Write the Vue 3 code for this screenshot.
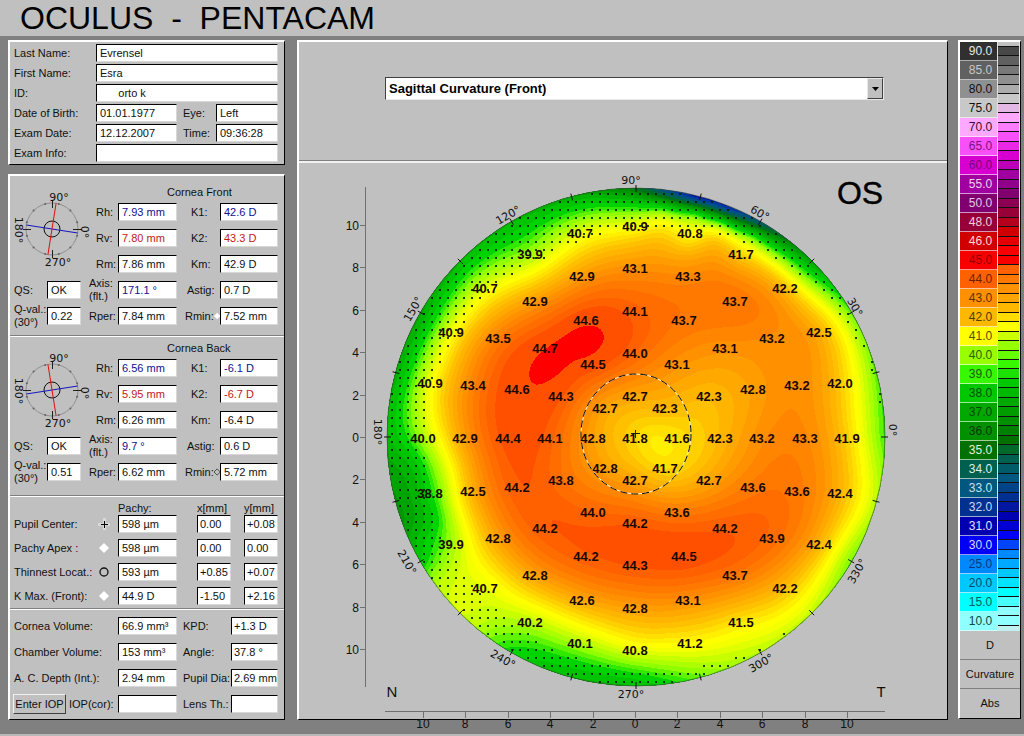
<script setup>
import { reactive, ref } from 'vue'

const title = 'OCULUS\u00a0 -\u00a0 PENTACAM'

const patient = reactive({
  last: 'Evrensel', first: 'Esra', id: '      orto k', birth: '01.01.1977',
  eye: 'Left', date: '12.12.2007', time: '09:36:28', info: ''
})

const corneas = reactive([
  {
    key: 'front', title: 'Cornea Front', axisAngle: 171, marker: 'solid',
    qs: 'OK', q: '0.22',
    rows: [
      { l: 'Rh:', v: '7.93 mm', l2: 'K1:', v2: '42.6 D', tone: 'blue' },
      { l: 'Rv:', v: '7.80 mm', l2: 'K2:', v2: '43.3 D', tone: 'red' },
      { l: 'Rm:', v: '7.86 mm', l2: 'Km:', v2: '42.9 D', tone: '' }
    ],
    axis: '171.1 °', astig: '0.7 D', rper: '7.84 mm', rmin: '7.52 mm'
  },
  {
    key: 'back', title: 'Cornea Back', axisAngle: 9, marker: 'open',
    qs: 'OK', q: '0.51',
    rows: [
      { l: 'Rh:', v: '6.56 mm', l2: 'K1:', v2: '-6.1 D', tone: 'blue' },
      { l: 'Rv:', v: '5.95 mm', l2: 'K2:', v2: '-6.7 D', tone: 'red' },
      { l: 'Rm:', v: '6.26 mm', l2: 'Km:', v2: '-6.4 D', tone: '' }
    ],
    axis: '9.7 °', astig: '0.6 D', rper: '6.62 mm', rmin: '5.72 mm'
  }
])

const pachy = reactive([
  { label: 'Pupil Center:', icon: 'plus', v: '598 µm', x: '0.00', y: '+0.08' },
  { label: 'Pachy Apex :', icon: 'diamond', v: '598 µm', x: '0.00', y: '0.00' },
  { label: 'Thinnest Locat.:', icon: 'ring', v: '593 µm', x: '+0.85', y: '+0.07' },
  { label: 'K Max. (Front):', icon: 'diamond', v: '44.9 D', x: '-1.50', y: '+2.16' }
])

const volumes = reactive([
  { l: 'Cornea Volume:', v: '66.9 mm³', l2: 'KPD:', v2: '+1.3 D' },
  { l: 'Chamber Volume:', v: '153 mm³', l2: 'Angle:', v2: '37.8 °' },
  { l: 'A. C. Depth (Int.):', v: '2.94 mm', l2: 'Pupil Dia:', v2: '2.69 mm' },
  { l: 'IOP(cor):', v: '', l2: 'Lens Th.:', v2: '', button: true }
])

const mapType = ref('Sagittal Curvature (Front)')

/* colour scale */
const swatches = [
  ['90.0', '#303030', '#e8e8e8'], ['85.0', '#606060', '#c8c8c8'], ['80.0', '#909090', '#101010'],
  ['75.0', '#c8c8c8', '#101010'], ['70.0', '#ffa8ff', '#301030'], ['65.0', '#f850f8', '#801080'],
  ['60.0', '#d800d0', '#780078'], ['55.0', '#a000a0', '#f0d0f0'], ['50.0', '#800070', '#e8c8e8'],
  ['48.0', '#980038', '#f0d0d8'], ['46.0', '#d00000', '#ffd8d0'], ['45.0', '#f80000', '#900000'],
  ['44.0', '#ff6000', '#702000'], ['43.0', '#ff9000', '#603000'], ['42.0', '#ffb800', '#504000'],
  ['41.0', '#ffff00', '#505000'], ['40.0', '#98ff00', '#306000'], ['39.0', '#38f800', '#106000'],
  ['38.0', '#00c800', '#005000'], ['37.0', '#00a800', '#004800'], ['36.0', '#009000', '#003800'],
  ['35.0', '#007000', '#e0f0e0'], ['34.0', '#006050', '#d8f0e8'], ['33.0', '#005880', '#c8e0f0'],
  ['32.0', '#003090', '#d0d8f8'], ['31.0', '#0000b0', '#e0e0ff'], ['30.0', '#0000f8', '#d8d8ff'],
  ['25.0', '#0088ff', '#003880'], ['20.0', '#00c8ff', '#004870'], ['15.0', '#00ffff', '#006060'],
  ['10.0', '#90ffff', '#104848']
].map(([value, color, ink]) => ({ value, color, ink }))

function mix(a, b) {
  const h = (s, i) => parseInt(s.slice(i, i + 2), 16)
  return `rgb(${[1, 3, 5].map(i => Math.round((h(a, i) + h(b, i)) / 2)).join(',')})`
}
const strip = Array.from({ length: 61 }, (_, k) => {
  const i = Math.floor((k + 1) / 2)
  if (k % 2 || i === 11) return swatches[i].color
  return mix(swatches[i].color, swatches[Math.min(i + 1, 30)].color)
})

/* measured points: x, y, dioptres */
const points = [
  [580, 233, '40.7'], [635, 226, '40.9'], [690, 233, '40.8'], [530, 254, '39.9'], [741, 254, '41.7'],
  [582, 276, '42.9'], [635, 268, '43.1'], [688, 276, '43.3'], [485, 288, '40.7'], [785, 288, '42.2'],
  [535, 301, '42.9'], [735, 301, '43.7'], [586, 320, '44.6'], [635, 311, '44.1'], [684, 320, '43.7'],
  [451, 332, '40.9'], [498, 338, '43.5'], [545, 348, '44.7'], [772, 338, '43.2'], [819, 332, '42.5'],
  [725, 348, '43.1'], [593, 364, '44.5'], [635, 353, '44.0'], [677, 364, '43.1'],
  [430, 383, '40.9'], [473, 385, '43.4'], [517, 389, '44.6'], [561, 396, '44.3'], [635, 396, '42.7'],
  [605, 408, '42.7'], [665, 408, '42.3'], [709, 396, '42.3'], [753, 389, '42.8'], [797, 385, '43.2'], [840, 383, '42.0'],
  [423, 438, '40.0'], [465, 438, '42.9'], [508, 438, '44.4'], [550, 438, '44.1'], [593, 438, '42.8'],
  [635, 438, '41.8'], [677, 438, '41.6'], [720, 438, '42.3'], [762, 438, '43.2'], [805, 438, '43.3'], [847, 438, '41.9'],
  [605, 468, '42.8'], [665, 468, '41.7'], [561, 480, '43.8'], [635, 480, '42.7'], [709, 480, '42.7'],
  [430, 493, '38.8'], [473, 491, '42.5'], [517, 487, '44.2'], [753, 487, '43.6'], [797, 491, '43.6'], [840, 493, '42.4'],
  [593, 512, '44.0'], [635, 523, '44.2'], [677, 512, '43.6'], [545, 528, '44.2'], [725, 528, '44.2'],
  [498, 538, '42.8'], [772, 538, '43.9'], [451, 544, '39.9'], [819, 544, '42.4'],
  [586, 556, '44.2'], [635, 565, '44.3'], [684, 556, '44.5'], [535, 575, '42.8'], [735, 575, '43.7'],
  [485, 588, '40.7'], [785, 588, '42.2'], [582, 600, '42.6'], [635, 608, '42.8'], [688, 600, '43.1'],
  [530, 622, '40.2'], [741, 622, '41.5'], [580, 643, '40.1'], [635, 650, '40.8'], [690, 643, '41.2']
]

/* rim estimate: angle, dioptres */
const rim = [
  [0, 39.2], [15, 39.4], [30, 39.4], [40, 38], [50, 36.4], [60, 33.6], [68, 31.4], [76, 31], [83, 33], [90, 35.6],
  [100, 37.2], [110, 37.7], [120, 37.9], [135, 37.9], [150, 37.3], [165, 37.6], [180, 37.9], [190, 37.2], [200, 36.9],
  [208, 38], [216, 40.1], [228, 40.4], [238, 39], [248, 38.2], [260, 37.9], [270, 38], [280, 39], [290, 39.8], [300, 40.2],
  [315, 40.3], [330, 39.5], [345, 40.2]
]
const CX = 636
const CY = 437
const R = 249
const rad = a => (a * Math.PI) / 180

const samples = points.map(([x, y, v]) => [x, y, Number(v)])
rim.forEach(([a, v]) => samples.push([CX + R * Math.cos(rad(a)), CY - R * Math.sin(rad(a)), v]))
samples.push(
  [536, 371, 44.82], [552, 360, 45], [568, 349, 45.1], [582, 340, 45], [594, 332, 44.85], [560, 335, 44.6], [575, 364, 44.6],
  [432, 518, 38.4], [408, 470, 37.7], [414, 520, 37.5], [420, 545, 38.4], [455, 470, 41.4], [456, 505, 40.9],
  [665, 208, 39], [695, 212, 38.8], [722, 221, 38.8], [752, 236, 39.3], [780, 254, 39.3], [805, 276, 39.6],
  [650, 436, 41.5]
)

/* thin plate spline through the samples */
function makeField(pts) {
  const n = pts.length
  const p = pts.map(([x, y, v]) => [(x - CX) / 100, (y - CY) / 100, v])
  const phi = d => (d > 0 ? d * Math.log(d) : 0)
  const size = n + 3
  const m = []
  for (let i = 0; i < size; i++) m.push(new Array(size + 1).fill(0))
  for (let i = 0; i < n; i++) {
    for (let j = 0; j < n; j++) m[i][j] = phi((p[i][0] - p[j][0]) ** 2 + (p[i][1] - p[j][1]) ** 2)
    m[i][i] += 0.015
    const t = [1, p[i][0], p[i][1]]
    t.forEach((c, k) => { m[i][n + k] = c; m[n + k][i] = c })
    m[i][size] = p[i][2]
  }
  for (let c = 0; c < size; c++) {
    let best = c
    for (let r = c + 1; r < size; r++) if (Math.abs(m[r][c]) > Math.abs(m[best][c])) best = r
    ;[m[c], m[best]] = [m[best], m[c]]
    for (let r = c + 1; r < size; r++) {
      const f = m[r][c] / m[c][c]
      if (f) for (let k = c; k <= size; k++) m[r][k] -= f * m[c][k]
    }
  }
  const w = new Array(size).fill(0)
  for (let r = size - 1; r >= 0; r--) {
    let s = m[r][size]
    for (let k = r + 1; k < size; k++) s -= m[r][k] * w[k]
    w[r] = s / m[r][r]
  }
  return (x, y) => {
    const u = (x - CX) / 100
    const v = (y - CY) / 100
    let s = w[n] + w[n + 1] * u + w[n + 2] * v
    for (let i = 0; i < n; i++) s += w[i] * phi((u - p[i][0]) ** 2 + (v - p[i][1]) ** 2)
    return s
  }
}

const levels = [
  [32, '#0038a0'], [33, '#005088'], [34, '#006058'], [35, '#007020'], [36, '#008800'], [36.5, '#009800'],
  [37, '#00a400'], [37.5, '#00b400'], [38, '#00c400'], [38.5, '#00d400'], [39, '#30e800'], [39.3, '#60f400'],
  [39.6, '#90ff00'], [39.9, '#acff00'], [40.2, '#c8ff00'], [40.5, '#e0ff00'], [40.75, '#f4ff00'], [41, '#ffff00'],
  [41.25, '#fff000'], [41.5, '#ffe000'], [41.75, '#ffd000'], [42, '#ffc000'], [42.25, '#ffb400'], [42.5, '#ffa800'],
  [42.75, '#ff9c00'], [43, '#ff9000'], [43.25, '#ff8400'], [43.5, '#ff7800'], [43.75, '#ff6c00'], [44, '#ff6000'],
  [44.25, '#ff5000'], [44.75, '#ff0000']
]

function buildBands() {
  const field = makeField(samples)
  const step = 4
  const n = 126
  const x0 = CX - (n * step) / 2
  const y0 = CY - (n * step) / 2
  const g = []
  for (let j = 0; j <= n; j++) {
    const row = []
    for (let i = 0; i <= n; i++) row.push(field(x0 + i * step, y0 + j * step))
    g.push(row)
  }
  return levels.map(([level, color]) => {
    let d = ''
    for (let j = 0; j < n; j++) {
      let run = -1
      for (let i = 0; i <= n; i++) {
        const c = i < n ? [g[j][i], g[j][i + 1], g[j + 1][i + 1], g[j + 1][i]] : [-1, -1, -1, -1]
        const full = c.every(v => v >= level)
        const x = x0 + i * step
        const y = y0 + j * step
        if (full) { if (run < 0) run = x; continue }
        if (run >= 0) { d += `M${run} ${y}H${x}v${step}H${run}z`; run = -1 }
        if (!c.some(v => v >= level)) continue
        const q = [[x, y], [x + step, y], [x + step, y + step], [x, y + step]]
        const out = []
        for (let k = 0; k < 4; k++) {
          const e = (k + 1) % 4
          if (c[k] >= level) out.push(q[k].join(' '))
          if (c[k] >= level !== c[e] >= level) {
            const t = (level - c[k]) / (c[e] - c[k])
            out.push(`${(q[k][0] + t * (q[e][0] - q[k][0])).toFixed(1)} ${(q[k][1] + t * (q[e][1] - q[k][1])).toFixed(1)}`)
          }
        }
        d += `M${out.join('L')}z`
      }
    }
    return { color, d }
  })
}
const bands = buildBands()

/* extrapolated area, one entry per 8 px row: last dot on the left, first dot on the right */
const dotRows = [
  [194, 900, 0], [202, 900, 0], [210, 900, 0], [218, 900, 0], [226, 900, 0], [234, 600, 720], [242, 576, 744],
  [250, 552, 768], [258, 544, 776], [266, 520, 792], [274, 512, 800], [282, 496, 816], [290, 488, 824],
  [298, 480, 832], [306, 472, 840], [314, 464, 840], [322, 464, 848], [330, 456, 856], [338, 448, 856],
  [346, 448, 864], [354, 440, 870], [362, 440, 870], [370, 432, 870], [378, 432, 900], [386, 424, 876],
  [394, 424, 876], [402, 424, 876], [410, 424, 900], [418, 424, 900], [426, 424, 900], [434, 408, 900],
  [442, 408, 900], [450, 416, 900], [458, 424, 900], [466, 424, 900], [474, 424, 900], [482, 424, 900],
  [490, 424, 900], [498, 424, 900], [506, 424, 900], [514, 432, 900], [522, 432, 900], [530, 432, 900],
  [538, 440, 900], [546, 432, 900], [554, 448, 900], [562, 456, 900], [570, 456, 900], [578, 464, 900],
  [586, 472, 900], [594, 480, 900], [602, 480, 900], [610, 496, 900], [618, 504, 900], [626, 512, 900],
  [634, 528, 784], [642, 536, 776], [650, 552, 760], [658, 576, 736], [666, 608, 704], [674, 900, 0], [682, 900, 0]
]
const dots = dotRows.map(([y, left, right]) => {
  let d = ''
  for (let x = 384; x <= 888; x += 8) {
    if ((x <= left || x >= right) && Math.hypot(x - CX, y - CY) < R - 1) d += `M${x - 1} ${y - 1}h2v2h-2z`
  }
  return d
}).join('')

const rimTicks = Array.from({ length: 24 }, (_, i) => {
  const a = rad(i * 15)
  const at = r => [CX + r * Math.cos(a), CY - r * Math.sin(a)]
  const [x1, y1] = at(R - 4)
  const [x2, y2] = at(R + 3)
  return { x1, y1, x2, y2 }
})
const rimLabels = [
  ['90°', 631, 180, 0], ['60°', 760, 213, 30], ['30°', 855, 307, 60], ['0°', 893, 430, 90], ['330°', 857, 571, -60],
  ['300°', 761, 663, -30], ['270°', 631, 694, 0], ['240°', 503, 659, 30], ['210°', 407, 562, 60],
  ['180°', 378, 432, 90], ['150°', 413, 309, -60], ['120°', 508, 215, -30]
]
const axisSteps = [-10, -8, -6, -4, -2, 0, 2, 4, 6, 8, 10].map(v => ({
  label: Math.abs(v), x: Math.round(635 + v * 21.2), y: Math.round(437 + v * 21.2)
}))
const dialTicks = Array.from({ length: 12 }, (_, i) => ({
  x: 38 + 26 * Math.cos(rad(i * 30 + 15)), y: 53 + 26 * Math.sin(rad(i * 30 + 15))
}))
</script>

<template>
  <div class="app">
    <header class="titlebar"><h1>{{ title }}</h1></header>
    <main class="workspace">
      <div class="side">
        <form class="panel patient">
          <label for="last">Last Name:</label><input id="last" v-model="patient.last" class="field wide">
          <label for="first">First Name:</label><input id="first" v-model="patient.first" class="field wide">
          <label for="pid">ID:</label><input id="pid" v-model="patient.id" class="field wide">
          <label for="birth">Date of Birth:</label><input id="birth" v-model="patient.birth" class="field">
          <label for="eye" class="second">Eye:</label><input id="eye" v-model="patient.eye" class="field">
          <label for="date">Exam Date:</label><input id="date" v-model="patient.date" class="field">
          <label for="time" class="second">Time:</label><input id="time" v-model="patient.time" class="field">
          <label for="info">Exam Info:</label><input id="info" v-model="patient.info" class="field wide">
        </form>

        <div class="panel results">
          <section v-for="c in corneas" :key="c.key" class="cornea" :class="c.key">
            <h2>{{ c.title }}</h2>
            <svg class="dial" width="80" height="94" viewBox="-4 0 80 94" aria-hidden="true">
              <circle cx="38" cy="53" r="26" fill="none" stroke="#909090" />
              <circle v-for="(t, i) in dialTicks" :key="i" :cx="t.x" :cy="t.y" r="1" fill="#606060" />
              <path d="M38.500 24v8M38.500 74v8M9 53.500h8M59 53.500h9" stroke="#202020" />
              <circle cx="38" cy="53" r="8" fill="none" stroke="#101010" />
              <g :transform="`rotate(${-c.axisAngle} 38 53)`">
                <path d="M12 53h52" stroke="#1818c0" /><path d="M38 27v52" stroke="#e01010" />
              </g>
              <text x="45" y="25">90°</text>
              <text x="44" y="90">270°</text>
              <text transform="translate(1 54) rotate(90)">180°</text>
              <text transform="translate(67 56) rotate(90)">0°</text>
            </svg>
            <template v-for="(r, i) in c.rows" :key="r.l">
              <label class="c3 inset" :for="`${c.key}-r${i}`">{{ r.l }}</label>
              <input :id="`${c.key}-r${i}`" v-model="r.v" class="field c4" :class="r.tone">
              <label class="c5 inset2" :for="`${c.key}-k${i}`">{{ r.l2 }}</label>
              <input :id="`${c.key}-k${i}`" v-model="r.v2" class="field c6" :class="r.tone">
            </template>
            <label :for="`${c.key}-qs`">QS:</label><input :id="`${c.key}-qs`" v-model="c.qs" class="field">
            <label class="c3 double" :for="`${c.key}-axis`">Axis:<br>(flt.)</label>
            <input :id="`${c.key}-axis`" v-model="c.axis" class="field blue">
            <label class="c5 inset3" :for="`${c.key}-ast`">Astig:</label><input :id="`${c.key}-ast`" v-model="c.astig" class="field">
            <label class="double" :for="`${c.key}-q`">Q-val.:<br>(30°)</label><input :id="`${c.key}-q`" v-model="c.q" class="field">
            <label class="c3" :for="`${c.key}-rper`">Rper:</label><input :id="`${c.key}-rper`" v-model="c.rper" class="field">
            <label class="c5 inset4" :for="`${c.key}-rmin`">Rmin:
              <svg width="8" height="8" viewBox="0 0 8 8" aria-hidden="true">
                <path d="M4 0L8 4 4 8 0 4z" :fill="c.marker === 'solid' ? '#ffffff' : 'none'" :stroke="c.marker === 'solid' ? 'none' : '#303030'" />
              </svg>
            </label>
            <input :id="`${c.key}-rmin`" v-model="c.rmin" class="field">
          </section>

          <section class="pachy">
            <span class="head h1st">Pachy:</span><span class="head hx">x[mm]</span><span class="head hy">y[mm]</span>
            <template v-for="(p, i) in pachy" :key="p.label">
              <label class="p1" :for="`p${i}`">{{ p.label }}</label>
              <svg class="sym" width="12" height="12" viewBox="0 0 12 12" aria-hidden="true">
                <template v-if="p.icon === 'plus'">
                  <path d="M6.500 0v12M0 6.500h12" stroke="#d8d8d8" stroke-width="3" />
                  <path d="M6.500 3v7M3 6.500h7" stroke="#000000" />
                </template>
                <path v-else-if="p.icon === 'diamond'" d="M6 1l5 5-5 5-5-5z" fill="#ffffff" />
                <circle v-else cx="6" cy="6" r="4" fill="none" stroke="#101010" stroke-width="1.300" />
              </svg>
              <input :id="`p${i}`" v-model="p.v" class="field p3">
              <input v-model="p.x" class="field p5" :aria-label="`${p.label} x`">
              <input v-model="p.y" class="field p7" :aria-label="`${p.label} y`">
            </template>
          </section>

          <section class="volumes">
            <template v-for="(v, i) in volumes" :key="v.l">
              <div v-if="v.button" class="iop"><button type="button">Enter IOP</button><label :for="`v${i}`">{{ v.l }}</label></div>
              <label v-else :for="`v${i}`">{{ v.l }}</label>
              <input :id="`v${i}`" v-model="v.v" class="field">
              <label class="second" :for="`w${i}`">{{ v.l2 }}</label>
              <input :id="`w${i}`" v-model="v.v2" class="field tight">
            </template>
          </section>
        </div>
      </div>

      <section class="panel map">
        <div class="picker">
          <div class="combo">
            <select v-model="mapType" aria-label="Map type">
              <option>Sagittal Curvature (Front)</option>
              <option>Tangential Curvature (Front)</option>
            </select>
            <span class="arrow"><svg width="7" height="4" viewBox="0 0 7 4" aria-hidden="true"><path d="M0 0h7L3.500 4z" /></svg></span>
          </div>
        </div>
        <svg class="topo" viewBox="299 163 648 556" role="img" aria-label="Corneal curvature map">
          <defs><clipPath id="disc"><circle :cx="CX" :cy="CY" :r="R" /></clipPath></defs>
          <g clip-path="url(#disc)">
            <circle :cx="CX" :cy="CY" :r="R" fill="#0010b0" />
            <path v-for="b in bands" :key="b.color" :d="b.d" :fill="b.color" shape-rendering="crispEdges" />
          </g>
          <circle :cx="CX" :cy="CY" :r="R" fill="none" stroke="#405030" stroke-opacity="0.600" />
          <path :d="dots" fill="#002000" fill-opacity="0.850" shape-rendering="crispEdges" />
          <line v-for="(t, i) in rimTicks" :key="i" v-bind="t" stroke="#101010" />
          <text
            v-for="l in rimLabels" :key="l[0]" class="rim"
            :transform="`translate(${l[1]} ${l[2]}) rotate(${l[3]})`" y="4"
          >{{ l[0] }}</text>
          <ellipse cx="636" cy="434" rx="55" ry="60" class="pupil-light" />
          <ellipse cx="636" cy="434" rx="55" ry="60" class="pupil-dark" />
          <path d="M635.500 430v8M631 433.500h9" stroke="#202020" />
          <g class="values"><text v-for="p in points" :key="`${p[0]}-${p[1]}`" :x="p[0]" :y="p[1] + 5">{{ p[2] }}</text></g>
          <g class="axes">
            <path d="M365.500 187V687M385 711.500H885" />
            <g v-for="s in axisSteps" :key="s.y">
              <path :d="`M360 ${s.y + 0.5}h5M${s.x + 0.5} 712v6`" />
              <text x="359" :y="s.y + 5" class="ylab">{{ s.label }}</text>
              <text :x="s.x" y="728" class="xlab">{{ s.label }}</text>
            </g>
          </g>
          <text x="392" y="697" class="side-label">N</text>
          <text x="881" y="697" class="side-label">T</text>
          <text x="860" y="204" class="eye-label">OS</text>
        </svg>
      </section>

      <aside class="panel scale">
        <div class="ramp">
          <ol>
            <li v-for="s in swatches" :key="s.value" :style="{ background: s.color, color: s.ink }">{{ s.value }}</li>
          </ol>
          <div class="strip">
            <i class="lead"></i>
            <i v-for="(c, i) in strip" :key="i" :style="{ background: c }"></i>
            <i class="tail"></i>
          </div>
        </div>
        <div class="mode">D</div>
        <div class="mode">Curvature</div>
        <div class="mode">Abs</div>
      </aside>
    </main>
  </div>
</template>

<style>
body { background: #808080; }
</style>

<style scoped>
* { box-sizing: border-box; }
.app {
  min-height: 100vh;
  display: flex;
  flex-direction: column;
  background: #808080;
  border-bottom: 2px solid #b8b8b8;
  font: 11px/13px "Liberation Sans", Arial, sans-serif;
  color: #101010;
}
.titlebar { height: 36px; background: #c0c0c0; padding-left: 20px; }
h1 {
  margin: 0;
  font-size: 32px;
  line-height: 36px;
  font-weight: 400;
  white-space: pre;
  color: #000;
}
.workspace {
  display: grid;
  grid-template-columns: 277px minmax(0, 1fr) 63px;
  align-items: start;
  padding: 4px 3px 12px 8px;
}
.side { display: flex; flex-direction: column; gap: 9px; }
.panel {
  background: #c0c0c0;
  border: solid;
  border-width: 2px 1px 1px 2px;
  border-color: #fff #000 #000 #fff;
}
.field {
  width: 100%;
  min-width: 0;
  height: 18px;
  padding: 0 0 0 3px;
  border: 1px solid;
  border-color: #000 #d8d8d8 #d8d8d8 #000;
  border-radius: 0;
  background: #fff;
  color: #101010;
  font: inherit;
  outline: 0;
}
.blue { color: #101090; }
.red { color: #c01818; }
label { white-space: nowrap; }

.patient {
  display: grid;
  grid-template-columns: 82px 81px 39px 1fr;
  align-items: center;
  row-gap: 2px;
  padding: 2px 6px 2px 4px;
}
.wide { grid-column: 2 / -1; }
.second { padding-left: 6px; }

.results section {
  display: grid;
  align-items: center;
  border-bottom: 1px solid #808080;
  border-top: 1px solid #fff;
  margin: 0;
}
.results section:first-child { border-top: 0; }
.results section:last-child { border-bottom: 0; }
.results .cornea {
  position: relative;
  grid-template-columns: 33px 34px 8px 29px 59px 43px 1fr;
  grid-template-rows: 19px repeat(5, 18px);
  row-gap: 8px;
  padding: 0 6px 10px 4px;
}
.results .back { grid-template-rows: 14px repeat(5, 18px); padding-bottom: 14px; }
h2 {
  grid-column: 1 / -1;
  grid-row: 1;
  align-self: end;
  margin: 0 0 -4px 153px;
  font: inherit;
}
.dial {
  position: absolute;
  left: 0;
  top: 0;
}
.dial text {
  font: 11px "DejaVu Sans", sans-serif;
  text-anchor: middle;
  fill: #101010;
}
.c3 { grid-column: 4; }
.c4 { grid-column: 5; }
.c5 { grid-column: 6; }
.c6 { grid-column: 7; }
.inset { padding-left: 7px; }
.inset2 { padding-left: 14px; }
.inset3 { padding-left: 10px; }
.inset4 { padding-left: 8px; display: flex; align-items: center; }
.double { margin-top: -4px; margin-bottom: -4px; }

.pachy {
  grid-template-columns: 84px 20px 59px 20px 34px 13px 1fr;
  grid-template-rows: 12px;
  grid-auto-rows: 18px;
  row-gap: 6px;
  padding: 0 6px 3px 4px;
}
.head { grid-row: 1; align-self: end; margin-bottom: -6px; white-space: nowrap; }
.h1st { grid-column: 1 / 4; padding-left: 104px; }
.hx { grid-column: 4 / 6; padding-left: 20px; }
.hy { grid-column: 6 / 8; padding-left: 13px; }
.p1 { grid-column: 1; }
.sym { grid-column: 2; }
.p3 { grid-column: 3; }
.p5 { grid-column: 5; }
.p7 { grid-column: 7; }
.p5, .p7 { padding-left: 2px; }

.volumes {
  grid-template-columns: 104px 59px 54px 1fr;
  row-gap: 8px;
  padding: 7px 6px 6px 4px;
}
.tight { padding-left: 2px; }
.iop { display: flex; align-items: center; gap: 3px; }
button {
  width: 53px;
  height: 20px;
  margin: -1px 0 -1px -1px;
  padding: 0;
  border: 1px solid;
  border-color: #f0f0f0 #404040 #404040 #f0f0f0;
  background: #c0c0c0;
  color: #101010;
  font: inherit;
}

.map { align-self: stretch; margin-left: 12px; margin-right: 10px; }
.picker {
  height: 119px;
  padding: 35px 63px 0 86px;
  border-bottom: 1px solid #808080;
}
.combo {
  display: flex;
  height: 23px;
  border: 1px solid;
  border-color: #404040 #e8e8e8 #e8e8e8 #404040;
  background: #fff;
}
select {
  flex: 1;
  min-width: 0;
  appearance: none;
  border: 0;
  padding: 0 3px;
  background: #fff;
  color: #000;
  font: bold 13px "Liberation Sans", Arial, sans-serif;
  outline: 0;
}
.arrow {
  display: flex;
  align-items: center;
  justify-content: center;
  width: 16px;
  background: #c0c0c0;
  border: 1px solid;
  border-color: #e8e8e8 #404040 #404040 #e8e8e8;
}
.topo {
  display: block;
  width: 100%;
  overflow: visible;
  border-top: 2px solid #f0f0f0;
  font-family: "Liberation Sans", Arial, sans-serif;
}
.rim { font: 11px "DejaVu Sans", sans-serif; text-anchor: middle; fill: #101010; }
.values text { font-size: 13px; font-weight: 700; text-anchor: middle; fill: #180800; }
.pupil-light { fill: none; stroke: #fff8d0; }
.pupil-dark { fill: none; stroke: #000; stroke-dasharray: 7 4; }
.axes path { stroke: #707070; fill: none; }
.axes text { font-size: 12px; fill: #101010; }
.ylab { text-anchor: end; }
.xlab, .side-label, .eye-label { text-anchor: middle; }
.side-label { font-size: 15px; fill: #101010; }
.eye-label { font-size: 32px; fill: #000; stroke: #000; stroke-width: 0.4px; }

.scale { display: flex; flex-direction: column; }
.ramp { display: flex; }
ol {
  width: 38px;
  margin: 0;
  padding: 0;
  list-style: none;
  border-right: 1px solid #e0e0e0;
}
li {
  height: 19px;
  padding-left: 4px;
  border-bottom: 1px solid rgba(255, 255, 255, 0.6);
  font-size: 12px;
  line-height: 18px;
  text-align: center;
}
.strip { flex: 1; display: flex; flex-direction: column; padding-right: 1px; background: #e0e0e0; }
.strip i { flex: 1; border-bottom: 1px solid #101010; }
.strip .lead { flex: 0 0 5px; background: #c0c0c0; }
.strip .tail { flex: 0 0 5px; background: #c0f0f0; border: 0; }
.mode {
  height: 29px;
  line-height: 28px;
  text-align: center;
  border-bottom: 1px solid #808080;
}
.mode:last-child { border-bottom: 0; }
</style>
